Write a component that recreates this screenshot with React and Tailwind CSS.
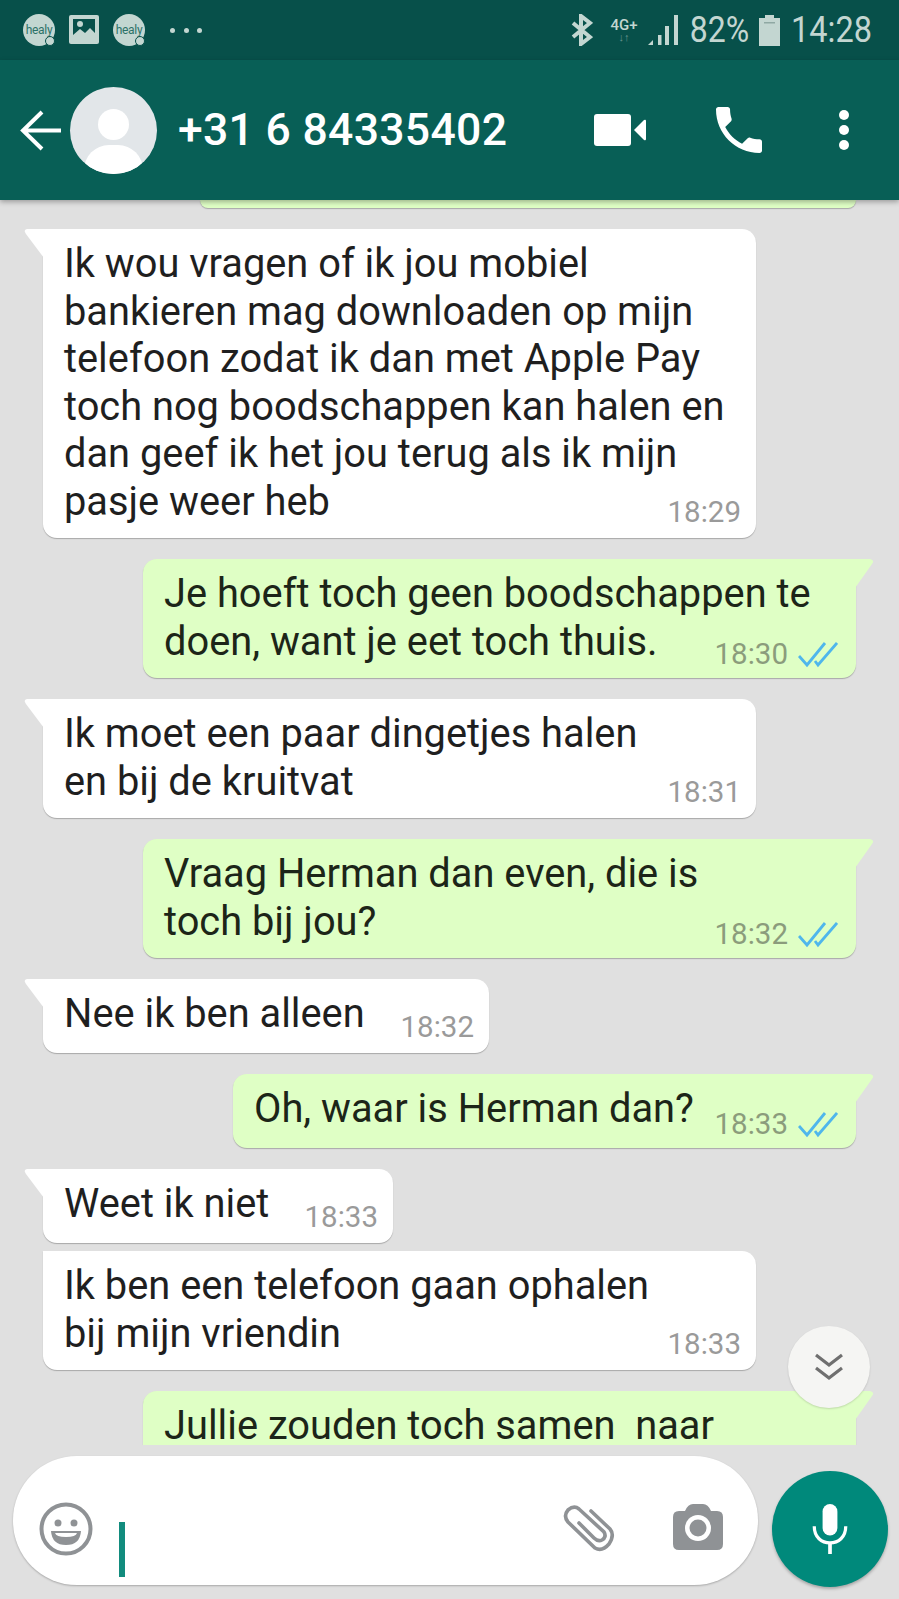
function HealyIcon() {
  return (
    <div className="relative w-[32px] h-[32px] rounded-full bg-[#c3d6d1] flex items-center justify-center">
      <span className="text-[12px] leading-none tracking-tight text-[#2d7268]">healy</span>
      <span className="absolute right-0 bottom-0 w-[10px] h-[10px] rounded-full bg-[#c3d6d1] border border-[#07504a]" />
    </div>
  );
}

function Ticks() {
  return (
    <svg width="40" height="28" viewBox="0 0 40 28" fill="none" stroke="#4fb6ec" strokeWidth="2.8">
      <path d="M1 16 L9 25 L27 3" />
      <path d="M17 21 L20 25 L39 3" />
    </svg>
  );
}

function Time({ children, out }) {
  return (
    <span className={"text-[29.5px] leading-none " + (out ? "text-[#8b9c7c]" : "text-[#9a9a9a]")}>{children}</span>
  );
}

function Incoming({ lines, time, width, tail = true, className = "" }) {
  return (
    <div className={"relative shrink-0 ml-[43px] min-h-[74px] rounded-[14px] rounded-tl-none bg-white pl-[21px] pr-[14px] pt-[11px] pb-[13px] shadow-[0_1px_1px_rgba(0,0,0,0.25)] " + width + " " + className}>
      {tail && (
        <svg className="absolute left-[-19px] top-0" width="20" height="29" viewBox="0 0 20 29">
          <path d="M20 0 L3 0 Q-1 1 2 5 L20 29 Z" fill="#ffffff" />
        </svg>
      )}
      {lines.map((l) => (
        <div key={l} className="text-[39.8px] leading-[47.5px] text-[#1f1f1f] whitespace-nowrap">{l}</div>
      ))}
      <div className="absolute right-[15px] bottom-[9px]">
        <Time>{time}</Time>
      </div>
    </div>
  );
}

function Outgoing({ lines, time, width, className = "" }) {
  return (
    <div className={"relative shrink-0 ml-auto mr-[43px] min-h-[74px] rounded-[14px] rounded-tr-none bg-[#dfffc5] pl-[21px] pr-[14px] pt-[11px] pb-[13px] shadow-[0_1px_1px_rgba(0,0,0,0.25)] " + width + " " + className}>
      <svg className="absolute right-[-18px] top-0" width="19" height="29" viewBox="0 0 19 29">
        <path d="M0 0 L15 0 Q20 1 17 5 L0 29 Z" fill="#dfffc5" />
      </svg>
      {lines.map((l) => (
        <div key={l} className="text-[39.8px] leading-[47.5px] text-[#1c2518] whitespace-pre">{l}</div>
      ))}
      {time && (
        <div className="absolute right-[18px] bottom-[9px] flex items-center gap-[10px]">
          <Time out>{time}</Time>
          <Ticks />
        </div>
      )}
    </div>
  );
}

export default function App() {
  return (
    <div className="relative w-[899px] h-[1599px] overflow-hidden flex flex-col bg-[#e0e0e0] font-['Roboto',sans-serif]">
      {/* status bar */}
      <div className="h-[60px] shrink-0 bg-[#07504a] flex items-center pl-[23px] pr-[27px] text-[#c3d6d1]">
        <HealyIcon />
        <svg className="ml-[14px]" width="30" height="30" viewBox="0 0 30 30">
          <rect width="30" height="29" rx="2" fill="#c3d6d1" />
          <rect x="4" y="4" width="22" height="21" fill="#07504a" />
          <circle cx="11" cy="9" r="3" fill="#c3d6d1" />
          <path d="M4 20 L11 14 L16 18 L21 13 L26 18 L26 25 L4 25 Z" fill="#c3d6d1" />
        </svg>
        <div className="ml-[14px]"><HealyIcon /></div>
        <div className="ml-[25px] flex gap-[8.5px]">
          <span className="w-[5px] h-[5px] rounded-full bg-[#c3d6d1]" />
          <span className="w-[5px] h-[5px] rounded-full bg-[#c3d6d1]" />
          <span className="w-[5px] h-[5px] rounded-full bg-[#c3d6d1]" />
        </div>
        <svg className="ml-auto" width="22" height="32" viewBox="0 0 22 32" fill="none" stroke="#c3d6d1" strokeWidth="4">
          <path d="M2 9 L19 23 L10 30 L10 2 L19 9 L2 23" />
        </svg>
        <div className="ml-[18px] flex flex-col items-center text-[15px] leading-[15px] font-medium">
          <span>4G+</span>
          <span className="text-[11px] leading-[10px] font-bold opacity-50">↓↑</span>
        </div>
        <svg className="ml-[10px]" width="31" height="31" viewBox="0 0 31 31" fill="#c3d6d1">
          <path d="M0 30 L5 25 L5 30 Z" />
          <rect x="10" y="20" width="3.500" height="10" />
          <rect x="17" y="11" width="4" height="19" />
          <rect x="26" y="0" width="4" height="30" />
        </svg>
        <span className="ml-[11px] text-[32px] leading-none scale-y-[1.13]">82%</span>
        <svg className="ml-[10px]" width="21" height="31" viewBox="0 0 21 31" fill="#c3d6d1">
          <path d="M6 0 H15 V3 H21 V31 H0 V3 H6 Z" />
          <rect x="5" y="7" width="11" height="1.5" fill="#8fa8a3" />
        </svg>
        <span className="ml-[11px] text-[32.5px] leading-none scale-y-[1.13]">14:28</span>
      </div>

      {/* header */}
      <div className="relative z-10 h-[140px] shrink-0 bg-[#085f56] flex items-center text-white shadow-[0_2px_5px_rgba(0,0,0,0.3)]">
        <svg className="ml-[20px]" width="41" height="41" viewBox="0 0 41 41" fill="none" stroke="#ffffff" strokeWidth="4">
          <path d="M41 20.5 H3 M22 2 L3 20.5 L22 39" />
        </svg>
        <div className="ml-[9px] w-[87px] h-[87px] rounded-full bg-[#e2e6e9] overflow-hidden relative shrink-0">
          <span className="absolute left-[28px] top-[22px] w-[31px] h-[31px] rounded-full bg-white" />
          <span className="absolute left-[14px] top-[58px] w-[59px] h-[50px] rounded-full bg-white" />
        </div>
        <span className="ml-[21px] text-[44.5px] leading-none font-medium tracking-[0.3px]">+31 6 84335402</span>
        <svg className="ml-auto" width="52" height="32" viewBox="0 0 52 32" fill="#ffffff">
          <rect x="0" y="0" width="37" height="32" rx="3" />
          <path d="M40 16 L50 6 Q52 5 52 7 V25 Q52 27 50 26 Z" />
        </svg>
        <svg className="ml-[70px]" width="46" height="46" viewBox="3 3 18 18" fill="#ffffff">
          <path d="M6.6 10.8c1.4 2.8 3.8 5.1 6.6 6.6l2.2-2.2c.3-.3.7-.4 1-.2 1.1.4 2.3.6 3.6.6.6 0 1 .4 1 1V20c0 .6-.4 1-1 1C10.6 21 3 13.4 3 4c0-.6.4-1 1-1h3.500c.6 0 1 .4 1 1 0 1.300.2 2.500.6 3.600.1.3 0 .7-.2 1l-2.300 2.200z" />
        </svg>
        <div className="ml-[77px] mr-[50px] flex flex-col gap-[5px]">
          <span className="w-[10px] h-[10px] rounded-full bg-white" />
          <span className="w-[10px] h-[10px] rounded-full bg-white" />
          <span className="w-[10px] h-[10px] rounded-full bg-white" />
        </div>
      </div>

      {/* messages */}
      <div className="h-[1245px] shrink-0 overflow-hidden flex flex-col">
        <div className="ml-auto mr-[43px] w-[656px] h-[8px] shrink-0 rounded-b-[14px] bg-[#dfffc5] shadow-[0_1px_1px_rgba(0,0,0,0.25)]" />
        <Incoming
          className="mt-[21px]"
          width="w-[713px]"
          time="18:29"
          lines={[
            "Ik wou vragen of ik jou mobiel",
            "bankieren mag downloaden op mijn",
            "telefoon zodat ik dan met Apple Pay",
            "toch nog boodschappen kan halen en",
            "dan geef ik het jou terug als ik mijn",
            "pasje weer heb",
          ]}
        />
        <Outgoing
          className="mt-[21px]"
          width="w-[713px]"
          time="18:30"
          lines={["Je hoeft toch geen boodschappen te", "doen, want je eet toch thuis."]}
        />
        <Incoming className="mt-[21px]" width="w-[713px]" time="18:31" lines={["Ik moet een paar dingetjes halen", "en bij de kruitvat"]} />
        <Outgoing className="mt-[21px]" width="w-[713px]" time="18:32" lines={["Vraag Herman dan even, die is", "toch bij jou?"]} />
        <Incoming className="mt-[21px]" width="w-[446px]" time="18:32" lines={["Nee ik ben alleen"]} />
        <Outgoing className="mt-[21px]" width="w-[623px]" time="18:33" lines={["Oh, waar is Herman dan?"]} />
        <Incoming className="mt-[21px]" width="w-[350px]" time="18:33" lines={["Weet ik niet"]} />
        <Incoming className="mt-[8px]" width="w-[713px]" tail={false} time="18:33" lines={["Ik ben een telefoon gaan ophalen", "bij mijn vriendin"]} />
        <Outgoing className="mt-[21px]" width="w-[713px]" lines={["Jullie zouden toch samen  naar"]} />
      </div>

      {/* scroll to bottom */}
      <div className="absolute left-[788px] top-[1326px] z-10 w-[82px] h-[82px] rounded-full bg-[#f5f5f3] flex items-center justify-center shadow-[0_1px_2px_rgba(0,0,0,0.15)]">
        <svg width="30" height="28" viewBox="0 0 30 28" fill="none" stroke="#6f6f6f" strokeWidth="3.200">
          <path d="M2 2 L15 12 L28 2" />
          <path d="M2 15 L15 25 L28 15" />
        </svg>
      </div>

      {/* input bar */}
      <div className="flex-1 flex items-start pl-[13px] pt-[11px]">
        <div className="w-[745px] h-[129px] rounded-[64px] bg-white shadow-[0_1px_2px_rgba(0,0,0,0.25)] flex items-center">
          <svg className="ml-[26px] mt-[16px]" width="54" height="54" viewBox="0 0 54 54">
            <circle cx="27" cy="27" r="24.500" fill="none" stroke="#8f9295" strokeWidth="4" />
            <circle cx="19" cy="21" r="3.500" fill="#8f9295" />
            <circle cx="35" cy="21" r="3.500" fill="#8f9295" />
            <path d="M12 29 H42 Q41 43 27 43 Q13 43 12 29 Z" fill="#8f9295" />
            <path d="M16 31 H38 Q37 35 27 35 Q17 35 16 31 Z" fill="#ffffff" />
          </svg>
          <span className="ml-[26px] mt-[57px] w-[6px] h-[55px] bg-[#128c7e]" />
          <svg className="ml-auto mt-[14px]" width="52" height="48" viewBox="0 0 52 48" fill="none" stroke="#8f9295" strokeWidth="3.600" strokeLinecap="round">
            <path d="M28 7 L47 25 Q52 31 46 40 Q39 48 32 44 L5 18 Q0 12 5 6 Q11 1 16 5 L41 28 Q44 33 39 36 Q35 38 31 34 L16 19" />
          </svg>
          <svg className="ml-[58px] mr-[35px] mt-[12px]" width="50" height="46" viewBox="0 0 50 46">
            <path d="M6 7 H12 Q15 0 20 0 H30 Q35 0 38 7 H44 Q50 7 50 13 V40 Q50 46 44 46 H6 Q0 46 0 40 V13 Q0 7 6 7 Z" fill="#8f9295" />
            <circle cx="25" cy="24" r="13" fill="#ffffff" />
            <circle cx="25" cy="24" r="8.500" fill="#8f9295" />
          </svg>
        </div>
        <div className="ml-[14px] mt-[15px] w-[116px] h-[116px] rounded-full bg-[#00897b] flex items-center justify-center shadow-[0_2px_3px_rgba(0,0,0,0.25)]">
          <svg width="38" height="50" viewBox="0 0 38 54" fill="none">
            <rect x="11" y="0" width="16" height="34" rx="8" fill="#ffffff" />
            <path d="M2 24 C2 36 10 42 19 42 C28 42 36 36 36 24" stroke="#ffffff" strokeWidth="3.500" />
            <path d="M19 42 V54" stroke="#ffffff" strokeWidth="4" />
          </svg>
        </div>
      </div>
    </div>
  );
}
